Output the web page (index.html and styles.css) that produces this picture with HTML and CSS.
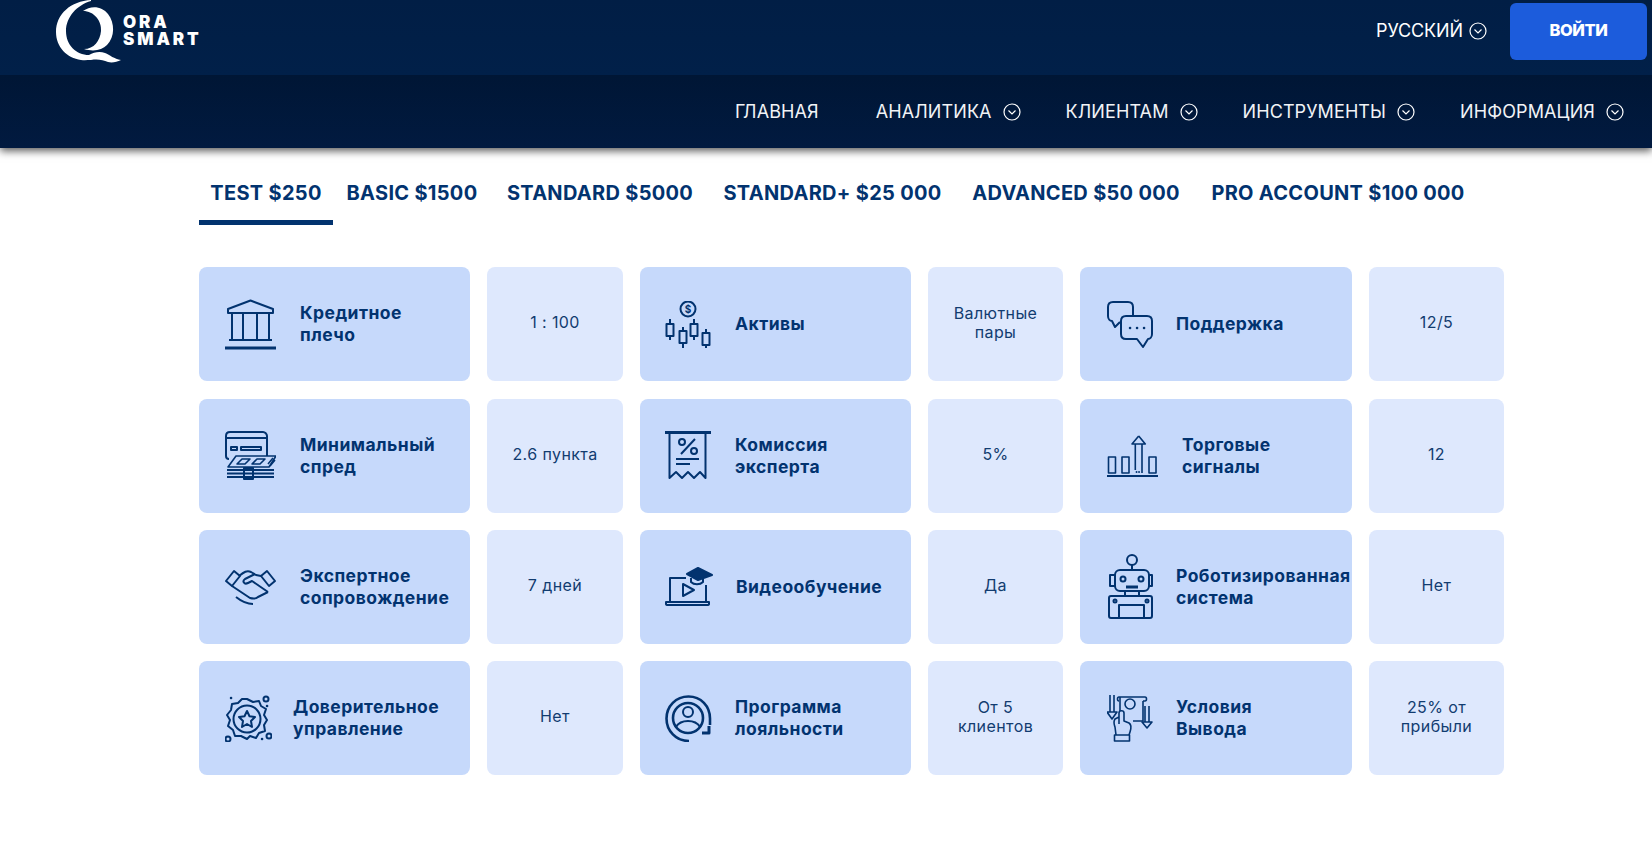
FILE: index.html
```html
<!DOCTYPE html>
<html lang="ru">
<head>
    <meta charset="UTF-8">
    <meta name="viewport" content="width=device-width, initial-scale=1.0">
    <title>Qora Smart - Счета</title>
    <link rel="stylesheet" href="styles.css">
</head>
<body>
    <header class="site-header">
        <div class="top-bar">
            <a class="logo" href="#">
                <svg class="logo-mark" viewBox="0 0 66 63" width="66" height="63">
                    <path d="M35 0C15 1 0 14 0 32C0 47 11 58 25 60C29 60.500 32 60 35 60C42 59 47 60 52 62C56 63 61 62 65 60C58 59 54 55 49 53C44 51 38 52 33 55C20 55 10 45 10 31C10 17 21 5 35 1Z" fill="#fff"/>
                    <path d="M27 11C35 5 46 6 52 14C59 23 59 37 51 45C46 50 38 52 28 49C38 49 44 41 45 31C46 21 38 11 27 11Z" fill="#fff"/>
                </svg>
                <span class="logo-text">ORA<br>SMART</span>
            </a>
            <div class="top-actions">
                <a class="lang" href="#">РУССКИЙ
                    <svg class="chevron" viewBox="0 0 18 18"><circle cx="9" cy="9" r="8"/><path d="M5.500 7.500L9 11L12.500 7.500"/></svg>
                </a>
                <button class="login-btn" type="button">ВОЙТИ</button>
            </div>
        </div>
        <nav class="nav-bar">
            <a class="nav-item nav-home" href="#">ГЛАВНАЯ</a>
            <a class="nav-item" href="#">АНАЛИТИКА <svg class="chevron" viewBox="0 0 18 18"><circle cx="9" cy="9" r="8"/><path d="M5.500 7.500L9 11L12.500 7.500"/></svg></a>
            <a class="nav-item" href="#">КЛИЕНТАМ <svg class="chevron" viewBox="0 0 18 18"><circle cx="9" cy="9" r="8"/><path d="M5.500 7.500L9 11L12.500 7.500"/></svg></a>
            <a class="nav-item" href="#">ИНСТРУМЕНТЫ <svg class="chevron" viewBox="0 0 18 18"><circle cx="9" cy="9" r="8"/><path d="M5.500 7.500L9 11L12.500 7.500"/></svg></a>
            <a class="nav-item" href="#">ИНФОРМАЦИЯ <svg class="chevron" viewBox="0 0 18 18"><circle cx="9" cy="9" r="8"/><path d="M5.500 7.500L9 11L12.500 7.500"/></svg></a>
        </nav>
    </header>

    <main class="container">
        <div class="tabs">
            <a class="tab active" href="#">TEST $250</a>
            <a class="tab" href="#">BASIC $1500</a>
            <a class="tab" href="#">STANDARD $5000</a>
            <a class="tab" href="#">STANDARD+ $25 000</a>
            <a class="tab" href="#">ADVANCED $50 000</a>
            <a class="tab" href="#">PRO ACCOUNT $100 000</a>
        </div>

        <div class="plan-grid">
            <div class="cell col-a">
                <svg class="icon" viewBox="0 0 51 51" width="51" height="51">
                    <path d="M3 10L25.500 1.500L48 10V14H3Z"/>
                    <path d="M7 14V40M18 14V40M32 14V40M44 14V40M4 41H47"/>
                    <path class="thick" d="M0 49H51"/>
                </svg>
                <span class="label">Кредитное<br>плечо</span>
            </div>
            <div class="value">1 : 100</div>

            <div class="cell col-b">
                <svg class="icon" viewBox="0 0 47 47" width="47" height="47">
                    <circle cx="23" cy="8" r="7.500"/>
                    <text class="icon-text" x="23" y="11.500">$</text>
                    <path d="M5 18V23M5 35V39M18 26V30M18 42V47M29 18V23M29 35V39M41 28V32M41 44V47"/>
                    <rect x="1.500" y="23" width="7" height="12"/>
                    <rect x="14.500" y="30" width="7" height="12"/>
                    <rect x="25.500" y="23" width="7" height="12"/>
                    <rect x="37.500" y="32" width="7" height="12"/>
                </svg>
                <span class="label">Активы</span>
            </div>
            <div class="value">Валютные<br>пары</div>

            <div class="cell col-c">
                <svg class="icon" viewBox="0 0 46 47" width="46" height="47">
                    <path d="M26 14V6C26 3 24 1 21 1H6C3 1 1 3 1 6V15C1 18 3 20 5 20L8 26L13 21"/>
                    <path d="M19 15H40C43 15 45 17 45 20V33C45 36 43 38 41 38V38L36 46L30 38H19C16 38 14 36 14 33V20C14 17 16 15 19 15Z"/>
                    <path class="dots" d="M23 27H23.100M30 27H30.100M37 27H37.100"/>
                </svg>
                <span class="label">Поддержка</span>
            </div>
            <div class="value">12/5</div>

            <div class="cell col-a">
                <svg class="icon" viewBox="0 0 51 49" width="51" height="49">
                    <path d="M4 28C2 28 1 27 1 25V5C1 3 2 1 5 1H38C40 1 42 3 42 5V25"/>
                    <path d="M1 7H42"/>
                    <rect x="6" y="16" width="6" height="3"/>
                    <rect x="16" y="16" width="20" height="3"/>
                    <path class="thin" d="M11 25H51L44 36H3Z"/>
                    <path class="thin" d="M12 33L17 28H25L20 33ZM27 33L32 28H40L35 33ZM43 33L48 27M45 35L50 29"/>
                    <path d="M2 39H49M2 42.500H49M2 46H49M19 37H28V48H19Z"/>
                </svg>
                <span class="label">Минимальный<br>спред</span>
            </div>
            <div class="value">2.6 пункта</div>

            <div class="cell col-b">
                <svg class="icon" viewBox="0 0 47 49" width="47" height="49">
                    <path class="thick" d="M0 1.500H46"/>
                    <path d="M4.500 2V47L11 41L17 47L23 41L29 47L35 41L40.500 47V2"/>
                    <path d="M11 28H34M11 33H25"/>
                    <path d="M30 8L16 23"/>
                    <circle cx="17" cy="11" r="3"/>
                    <circle cx="29" cy="20" r="3"/>
                </svg>
                <span class="label">Комиссия<br>эксперта</span>
            </div>
            <div class="value">5%</div>

            <div class="cell col-c col-signal">
                <svg class="icon" viewBox="0 0 51 42" width="51" height="42">
                    <path class="thin" d="M31.700 1L25 9H28.300V35M31.700 1L38.300 9H35V38M25 9H38.300"/>
                    <rect class="thin" x="1.500" y="22" width="7" height="16"/>
                    <rect class="thin" x="15" y="22" width="7" height="16"/>
                    <rect class="thin" x="42" y="22" width="7" height="16"/>
                    <path d="M0 41H51"/>
                    <path class="dots-small" d="M29.500 37H29.600M32 37H32.100"/>
                </svg>
                <span class="label">Торговые<br>сигналы</span>
            </div>
            <div class="value">12</div>

            <div class="cell col-a">
                <svg class="icon" viewBox="0 0 51 37" width="51" height="37">
                    <path d="M1 13L9 3L15 8L7 18Z"/>
                    <path d="M50 13L42 3L36 8L44 18Z"/>
                    <path d="M14 8C19 4 22 2 26 4L31 7L36 8"/>
                    <path d="M30 6L20 11C17 13 19 17 23 15L27 13L43 24"/>
                    <path d="M7 18L25 30C29 31 31 31 33 29L43 24"/>
                    <path d="M11 29C16 33 21 36 28 36"/>
                </svg>
                <span class="label">Экспертное<br>сопровождение</span>
            </div>
            <div class="value">7 дней</div>

            <div class="cell col-b">
                <svg class="icon" viewBox="0 0 48 39" width="48" height="39">
                    <path d="M21 11H5V35M41 18V35"/>
                    <path d="M1 35H44V37C44 38 43 38 42 38H3C2 38 1 38 1 37Z"/>
                    <path d="M18 17V29L29 23Z"/>
                    <path class="fill" d="M33 1L47 8L33 13L22 7Z"/>
                    <path d="M26 11V15C29 18 35 18 38 15V11"/>
                </svg>
                <span class="label">Видеообучение</span>
            </div>
            <div class="value">Да</div>

            <div class="cell col-c">
                <svg class="icon" viewBox="0 0 46 65" width="46" height="65">
                    <circle cx="25" cy="6" r="5"/>
                    <path d="M25 11V16"/>
                    <rect x="8" y="16" width="34" height="21" rx="5"/>
                    <circle cx="16" cy="25" r="2.500"/>
                    <circle cx="34" cy="25" r="2.500"/>
                    <path class="thick" d="M19 33H31"/>
                    <path d="M8 21H3V32H8M42 21H45V32H42"/>
                    <path d="M18 37V42H32V37"/>
                    <rect x="2" y="42" width="43" height="22" rx="2"/>
                    <path d="M12 64V51H37V64"/>
                    <circle cx="8" cy="47" r="1.500"/>
                    <circle cx="40" cy="47" r="1.500"/>
                </svg>
                <span class="label">Роботизированная<br>система</span>
            </div>
            <div class="value">Нет</div>

            <div class="cell col-a col-trust">
                <svg class="icon" viewBox="0 0 47 47" width="47" height="47">
                    <path d="M22 4L28 7L34 6L36 11L41 14L39 20L42 25L39 30L40 36L34 38L31 43L25 41L22 44L16 41L10 41L8 35L3 31L5 25L2 20L6 15L7 9L13 8L17 4Z"/>
                    <circle cx="22" cy="24" r="13.500"/>
                    <path class="star" d="M22 16L24.500 21.300L30 22L26 26L27 32L22 29L17 32L18 26L14 22L19.500 21.300Z"/>
                    <circle cx="41" cy="4" r="2.500"/>
                    <circle cx="3" cy="44" r="2.500"/>
                    <circle cx="44" cy="41" r="2.500"/>
                    <path class="dots" d="M6 3H6.100M42 11H42.100M37 44H37.100"/>
                </svg>
                <span class="label">Доверительное<br>управление</span>
            </div>
            <div class="value">Нет</div>

            <div class="cell col-b">
                <svg class="icon" viewBox="0 0 47 47" width="47" height="47">
                    <circle class="heavy" cx="23" cy="23" r="15"/>
                    <circle cx="23" cy="17" r="5"/>
                    <path d="M11 32C14 27 19 26 23 26C27 26 32 27 35 32"/>
                    <path class="heavy" d="M24 46C11 46 1.500 36 1.500 23.500C1.500 11 11 1.500 23.500 1.500C36 1.500 45 11 45 23.500V30"/>
                    <path class="thick" d="M37 38H44V31"/>
                </svg>
                <span class="label">Программа<br>лояльности</span>
            </div>
            <div class="value">От 5<br>клиентов</div>

            <div class="cell col-c">
                <svg class="icon" viewBox="0 0 46 48" width="46" height="48">
                    <path class="thin" d="M3 1V18M7 1V18M0 18H10L5 25Z"/>
                    <path class="thin" d="M12 3H38C40 3 40 7 38 7H36M12 3C10 3 10 7 12 7M13 3V17M36 7V27H26"/>
                    <circle class="thin" cx="23" cy="10" r="5"/>
                    <path class="thin" d="M9 41L8 33C7 30 6 28 8 25L12 23M12 30V19C12 16 17 16 17 19V27L22 29C25 31 24 35 23 38L22 41"/>
                    <rect class="thin" x="7.500" y="41" width="15" height="6"/>
                    <path class="thin" d="M38 12V28M42 12V28M35 28H45L40 34Z"/>
                </svg>
                <span class="label">Условия<br>Вывода</span>
            </div>
            <div class="value">25% от<br>прибыли</div>
        </div>
    </main>
</body>
</html>
```

FILE: styles.css
```css
* {
    box-sizing: border-box;
}

body {
    margin: 0;
    background-color: #ffffff;
    font-family: Inter, "Noto Sans", sans-serif;
    color: #02336f;
}

a {
    color: inherit;
    text-decoration: none;
}

/* header */
.site-header {
    box-shadow: 0 3px 8px rgba(0, 0, 0, 0.65);
}

.top-bar {
    height: 75px;
    background: linear-gradient(#011e45, #012049);
    display: flex;
    justify-content: space-between;
    align-items: flex-start;
    padding: 0 5px 0 56px;
    color: #ffffff;
}

.logo {
    display: flex;
    align-items: flex-start;
}

.logo-mark {
    display: block;
}

.logo-text {
    margin: 14px 0 0 1px;
    font-size: 17px;
    font-weight: 900;
    line-height: 17px;
    letter-spacing: 2.900px;
}

.top-actions {
    display: flex;
    align-items: flex-start;
    gap: 23px;
}

.lang {
    display: flex;
    align-items: center;
    gap: 6px;
    margin-top: 20px;
    font-size: 18px;
    line-height: 22px;
    letter-spacing: -0.1px;
}

.chevron {
    width: 18px;
    height: 18px;
    fill: none;
    stroke: #ffffff;
    stroke-width: 1.200;
    flex: none;
}

.login-btn {
    width: 137px;
    height: 57px;
    margin-top: 3px;
    padding: 0 0 3px;
    border: none;
    border-radius: 6px;
    background-color: #1c5cdc;
    color: #ffffff;
    font-family: inherit;
    font-size: 16.500px;
    font-weight: 800;
    letter-spacing: -0.4px;
    cursor: pointer;
}

.nav-bar {
    height: 73px;
    background: linear-gradient(#001635, #011a40);
    display: flex;
    justify-content: flex-end;
    align-items: center;
    gap: 45px;
    padding: 0 28px 0 0;
    color: #f1f3f6;
}

.nav-item {
    display: flex;
    align-items: center;
    gap: 11px;
    font-size: 18px;
    font-weight: 400;
    letter-spacing: 0.1px;
    line-height: 22px;
}

.nav-home {
    margin-right: 12px;
}

/* tabs */
.container {
    margin: 0 148px 0 199px;
}

.tabs {
    display: grid;
    grid-template-columns: 134px 158px 218px 247px 240px 284px;
    margin-top: 27px;
}

.tab {
    height: 50px;
    padding-top: 6px;
    text-align: center;
    font-size: 20px;
    font-weight: 700;
    line-height: 24px;
    letter-spacing: 0.3px;
    white-space: nowrap;
}

.tab.active {
    border-bottom: 5px solid #02336f;
}

/* grid */
.plan-grid {
    display: grid;
    grid-template-columns: 271px 136px 271px 135px 272px 135px;
    grid-auto-rows: 114px;
    gap: 17.400px 17px;
    margin-top: 42.200px;
}

.cell {
    display: flex;
    align-items: center;
    border-radius: 8px;
    background-color: #c6d9fb;
    white-space: nowrap;
}

.value {
    display: flex;
    align-items: center;
    justify-content: center;
    padding-bottom: 3px;
    border-radius: 8px;
    background-color: #dee8fd;
    text-align: center;
    font-size: 16px;
    line-height: 19px;
    letter-spacing: 0.4px;
    color: #123c70;
}

.icon {
    flex: none;
    fill: none;
    stroke: #02336f;
    stroke-width: 2;
    stroke-linejoin: round;
}

.icon .thick {
    stroke-width: 3;
}

.icon .heavy {
    stroke-width: 2.600;
}

.icon .thin {
    stroke-width: 1.600;
}

.icon .fill {
    fill: #02336f;
}

.icon .dots {
    stroke-width: 2.500;
    stroke-linecap: round;
}

.icon .dots-small {
    stroke-width: 1.800;
    stroke-linecap: round;
}

.icon-text {
    fill: #02336f;
    stroke: none;
    font-size: 10px;
    font-weight: 700;
    text-anchor: middle;
}

.label {
    font-size: 17.500px;
    font-weight: 700;
    line-height: 22px;
    letter-spacing: 0.45px;
}

.col-a {
    padding-left: 26px;
}

.col-a .icon {
    margin-right: 24px;
}

.col-b {
    padding-left: 25px;
}

.col-b .icon {
    margin-right: 23px;
}

.col-c {
    padding-left: 27px;
}

.col-c .icon {
    margin-right: 23px;
}

.col-signal .icon {
    margin-right: 24px;
}

.col-trust .icon {
    margin-right: 21px;
}
```
